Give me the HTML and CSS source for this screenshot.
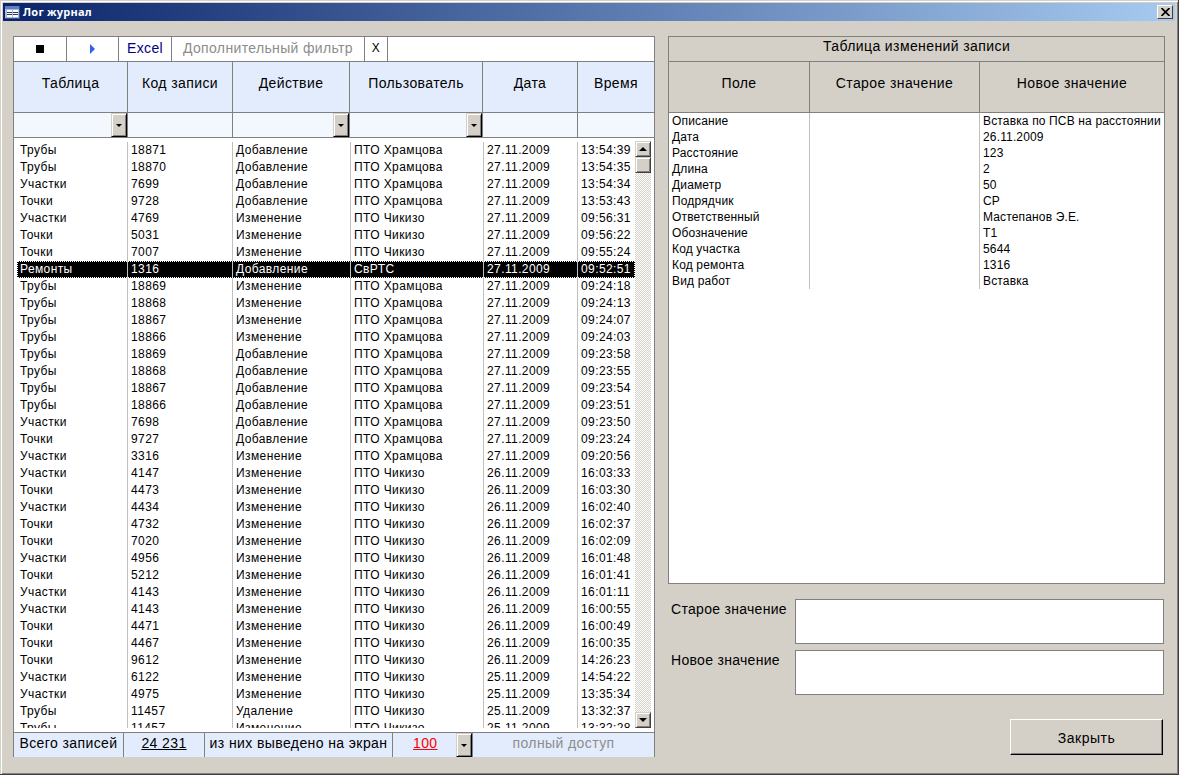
FILE: index.html
```html
<!DOCTYPE html>
<html lang="ru">
<head>
<meta charset="utf-8">
<title>Лог журнал</title>
<link rel="stylesheet" href="styles.css">
</head>
<body>
<div class="window">
  <div class="titlebar">
    <svg class="app-icon" width="15" height="13" viewBox="0 0 15 13"><rect width="15" height="13" fill="#a9b8dc"/><rect x="0" y="0" width="15" height="3" fill="#5f7fc4"/><rect x="2" y="4" width="5" height="7" fill="#fff"/><rect x="8" y="4" width="5" height="7" fill="#fff"/><path d="M2 6.5h5M2 8.500h5M8 6.500h5M8 8.500h5" stroke="#26365f"/><path d="M0 12.500h15M14.500 0v13" stroke="#3d5288"/></svg>
    <span class="title-text">Лог журнал</span>
    <span class="close-btn"><svg width="9" height="8" viewBox="0 0 9 8"><path d="M0.5 0l8 8M8.500 0l-8 8" fill="none" stroke="#000" stroke-width="1.7"/></svg></span>
  </div>
  <div class="content">
    <section class="log">
      <div class="toolbar">
        <div class="tb tb-stop"><i class="stop"></i></div>
        <div class="tb tb-next"><i class="next"></i></div>
        <div class="tb tb-excel">Excel</div>
        <div class="tb tb-filter">Дополнительный фильтр</div>
        <div class="tb tb-x">X</div>
      </div>
      <div class="log-head">
        <div>Таблица</div><div>Код записи</div><div>Действие</div><div>Пользователь</div><div>Дата</div><div>Время</div>
      </div>
      <div class="log-filter">
        <div><span class="drop"><i></i></span></div><div></div><div><span class="drop"><i></i></span></div><div><span class="drop"><i></i></span></div><div></div><div></div>
      </div>
      <div class="log-list">
        <div class="rows">
          <div class="row"><span>Трубы</span><span>18871</span><span>Добавление</span><span>ПТО Храмцова</span><span>27.11.2009</span><span>13:54:39</span></div>
          <div class="row"><span>Трубы</span><span>18870</span><span>Добавление</span><span>ПТО Храмцова</span><span>27.11.2009</span><span>13:54:35</span></div>
          <div class="row"><span>Участки</span><span>7699</span><span>Добавление</span><span>ПТО Храмцова</span><span>27.11.2009</span><span>13:54:34</span></div>
          <div class="row"><span>Точки</span><span>9728</span><span>Добавление</span><span>ПТО Храмцова</span><span>27.11.2009</span><span>13:53:43</span></div>
          <div class="row"><span>Участки</span><span>4769</span><span>Изменение</span><span>ПТО Чикизо</span><span>27.11.2009</span><span>09:56:31</span></div>
          <div class="row"><span>Точки</span><span>5031</span><span>Изменение</span><span>ПТО Чикизо</span><span>27.11.2009</span><span>09:56:22</span></div>
          <div class="row"><span>Точки</span><span>7007</span><span>Изменение</span><span>ПТО Чикизо</span><span>27.11.2009</span><span>09:55:24</span></div>
          <div class="row selected"><span>Ремонты</span><span>1316</span><span>Добавление</span><span>СвРТС</span><span>27.11.2009</span><span>09:52:51</span></div>
          <div class="row"><span>Трубы</span><span>18869</span><span>Изменение</span><span>ПТО Храмцова</span><span>27.11.2009</span><span>09:24:18</span></div>
          <div class="row"><span>Трубы</span><span>18868</span><span>Изменение</span><span>ПТО Храмцова</span><span>27.11.2009</span><span>09:24:13</span></div>
          <div class="row"><span>Трубы</span><span>18867</span><span>Изменение</span><span>ПТО Храмцова</span><span>27.11.2009</span><span>09:24:07</span></div>
          <div class="row"><span>Трубы</span><span>18866</span><span>Изменение</span><span>ПТО Храмцова</span><span>27.11.2009</span><span>09:24:03</span></div>
          <div class="row"><span>Трубы</span><span>18869</span><span>Добавление</span><span>ПТО Храмцова</span><span>27.11.2009</span><span>09:23:58</span></div>
          <div class="row"><span>Трубы</span><span>18868</span><span>Добавление</span><span>ПТО Храмцова</span><span>27.11.2009</span><span>09:23:55</span></div>
          <div class="row"><span>Трубы</span><span>18867</span><span>Добавление</span><span>ПТО Храмцова</span><span>27.11.2009</span><span>09:23:54</span></div>
          <div class="row"><span>Трубы</span><span>18866</span><span>Добавление</span><span>ПТО Храмцова</span><span>27.11.2009</span><span>09:23:51</span></div>
          <div class="row"><span>Участки</span><span>7698</span><span>Добавление</span><span>ПТО Храмцова</span><span>27.11.2009</span><span>09:23:50</span></div>
          <div class="row"><span>Точки</span><span>9727</span><span>Добавление</span><span>ПТО Храмцова</span><span>27.11.2009</span><span>09:23:24</span></div>
          <div class="row"><span>Участки</span><span>3316</span><span>Изменение</span><span>ПТО Храмцова</span><span>27.11.2009</span><span>09:20:56</span></div>
          <div class="row"><span>Участки</span><span>4147</span><span>Изменение</span><span>ПТО Чикизо</span><span>26.11.2009</span><span>16:03:33</span></div>
          <div class="row"><span>Точки</span><span>4473</span><span>Изменение</span><span>ПТО Чикизо</span><span>26.11.2009</span><span>16:03:30</span></div>
          <div class="row"><span>Участки</span><span>4434</span><span>Изменение</span><span>ПТО Чикизо</span><span>26.11.2009</span><span>16:02:40</span></div>
          <div class="row"><span>Точки</span><span>4732</span><span>Изменение</span><span>ПТО Чикизо</span><span>26.11.2009</span><span>16:02:37</span></div>
          <div class="row"><span>Точки</span><span>7020</span><span>Изменение</span><span>ПТО Чикизо</span><span>26.11.2009</span><span>16:02:09</span></div>
          <div class="row"><span>Участки</span><span>4956</span><span>Изменение</span><span>ПТО Чикизо</span><span>26.11.2009</span><span>16:01:48</span></div>
          <div class="row"><span>Точки</span><span>5212</span><span>Изменение</span><span>ПТО Чикизо</span><span>26.11.2009</span><span>16:01:41</span></div>
          <div class="row"><span>Участки</span><span>4143</span><span>Изменение</span><span>ПТО Чикизо</span><span>26.11.2009</span><span>16:01:11</span></div>
          <div class="row"><span>Участки</span><span>4143</span><span>Изменение</span><span>ПТО Чикизо</span><span>26.11.2009</span><span>16:00:55</span></div>
          <div class="row"><span>Точки</span><span>4471</span><span>Изменение</span><span>ПТО Чикизо</span><span>26.11.2009</span><span>16:00:49</span></div>
          <div class="row"><span>Точки</span><span>4467</span><span>Изменение</span><span>ПТО Чикизо</span><span>26.11.2009</span><span>16:00:35</span></div>
          <div class="row"><span>Точки</span><span>9612</span><span>Изменение</span><span>ПТО Чикизо</span><span>26.11.2009</span><span>14:26:23</span></div>
          <div class="row"><span>Участки</span><span>6122</span><span>Изменение</span><span>ПТО Чикизо</span><span>25.11.2009</span><span>14:54:22</span></div>
          <div class="row"><span>Участки</span><span>4975</span><span>Изменение</span><span>ПТО Чикизо</span><span>25.11.2009</span><span>13:35:34</span></div>
          <div class="row"><span>Трубы</span><span>11457</span><span>Удаление</span><span>ПТО Чикизо</span><span>25.11.2009</span><span>13:32:37</span></div>
          <div class="row"><span>Трубы</span><span>11457</span><span>Изменение</span><span>ПТО Чикизо</span><span>25.11.2009</span><span>13:32:28</span></div>
        </div>
        <div class="scrollbar">
          <span class="sb-btn"><i class="up"></i></span>
          <span class="sb-thumb"></span>
          <span class="sb-track"></span>
          <span class="sb-btn"><i class="down"></i></span>
        </div>
      </div>
      <div class="log-foot">
        <div class="f-total">Всего записей</div>
        <div class="f-count">24 231</div>
        <div class="f-shown">из них выведено на экран</div>
        <div class="f-limit"><u>100</u><span class="drop"><i></i></span></div>
        <div class="f-access">полный доступ</div>
      </div>
    </section>
    <section class="changes">
      <div class="ch-title">Таблица изменений записи</div>
      <div class="ch-head"><div>Поле</div><div>Старое значение</div><div>Новое значение</div></div>
      <div class="ch-body">
        <div class="ch-row"><span>Описание</span><span></span><span>Вставка по ПСВ на расстоянии</span></div>
        <div class="ch-row"><span>Дата</span><span></span><span>26.11.2009</span></div>
        <div class="ch-row"><span>Расстояние</span><span></span><span>123</span></div>
        <div class="ch-row"><span>Длина</span><span></span><span>2</span></div>
        <div class="ch-row"><span>Диаметр</span><span></span><span>50</span></div>
        <div class="ch-row"><span>Подрядчик</span><span></span><span>СР</span></div>
        <div class="ch-row"><span>Ответственный</span><span></span><span>Мастепанов Э.Е.</span></div>
        <div class="ch-row"><span>Обозначение</span><span></span><span>Т1</span></div>
        <div class="ch-row"><span>Код участка</span><span></span><span>5644</span></div>
        <div class="ch-row"><span>Код ремонта</span><span></span><span>1316</span></div>
        <div class="ch-row"><span>Вид работ</span><span></span><span>Вставка</span></div>
      </div>
      <div class="value-row first"><label>Старое значение</label><div class="value-box"></div></div>
      <div class="value-row"><label>Новое значение</label><div class="value-box"></div></div>
      <div class="actions"><button class="close-action" type="button">Закрыть</button></div>
    </section>
  </div>
</div>
</body>
</html>
```
FILE: styles.css
```css
* { box-sizing: border-box; }
html, body { margin: 0; padding: 0; background: #d4d0c8; }
body { font-family: "Liberation Sans", Arial, sans-serif; font-size: 12px; color: #000; overflow: hidden; }

.window {
  width: 1179px; height: 775px; padding: 3px;
  background: #d4d0c8;
  border-right: 1px solid #404040; border-bottom: 1px solid #404040;
  box-shadow: inset 1px 1px 0 #d4d0c8, inset 2px 2px 0 #fff, inset -1px -1px 0 #808080;
}
.titlebar {
  height: 18px; display: flex; align-items: center; padding: 0 2px 0 2px;
  background: linear-gradient(90deg, #0a246a, #a6caf0);
}
.app-icon { flex: none; margin-right: 3px; }
.title-text { color: #fff; font: bold 11px "Noto Sans", sans-serif; letter-spacing: .25px; flex: 1; position: relative; top: -1px; }
.close-btn {
  width: 16px; height: 14px; display: flex; align-items: center; justify-content: center;
  background: #d4d0c8; border: 1px solid; border-color: #fff #404040 #404040 #fff;
}

.content { display: flex; gap: 13px; padding: 15px 0 0 10px; }

/* left panel */
.log { width: 642px; height: 721px; display: flex; flex-direction: column; border: 1px solid #808080; background: #fff; }
.toolbar { height: 25px; flex: none; display: flex; border-bottom: 1px solid #808080; background: #fff; font-size: 14px; letter-spacing: .35px; }
.tb { display: flex; align-items: center; justify-content: center; border-right: 1px solid #808080; padding-bottom: 2px; }
.tb-stop { width: 53px; padding-bottom: 0; }
.tb-next { width: 52px; padding-bottom: 0; }
.tb-excel { width: 53px; color: #000080; }
.tb-filter { width: 193px; color: #8c8c8c; }
.tb-x { width: 23px; font-size: 12px; }
.stop { width: 8px; height: 8px; background: #000; display: block; }
.next { width: 0; height: 0; border-left: 5px solid #2f62f0; border-top: 5px solid transparent; border-bottom: 5px solid transparent; display: block; }

.log-head, .log-filter { display: grid; grid-template-columns: 114px 105px 117px 133px 95px 76px; flex: none; }
.log-head { height: 51px; background: #e3ecfd; border-bottom: 1px solid #808080; font-size: 14px; letter-spacing: .4px; }
.log-head > div { display: flex; align-items: center; justify-content: center; border-right: 1px solid #808080; padding-bottom: 8px; }
.log-head > div:last-child, .log-filter > div:last-child { border-right: 0; }
.log-filter { height: 25px; background: #f3f8ff; border-bottom: 1px solid #808080; }
.log-filter > div { display: flex; justify-content: flex-end; border-right: 1px solid #808080; }

.drop {
  width: 16px; height: 24px; display: flex; align-items: center; justify-content: center; flex: none;
  background: #d4d0c8; border: 1px solid; border-color: #d4d0c8 #000 #000 #d4d0c8;
  box-shadow: inset 1px 1px 0 #fff, inset -1px -1px 0 #808080;
}
.drop i { width: 0; height: 0; border-top: 3px solid #000; border-left: 3px solid transparent; border-right: 3px solid transparent; display: block; }

.log-list { height: 594px; flex: none; display: flex; align-items: flex-start; background: #fff; padding: 4px 0 0 3px; }
.rows { width: 618px; height: 586px; flex: none; overflow: hidden; }
.row { height: 17px; display: grid; grid-template-columns: 111px 105px 118px 133px 94px 57px; line-height: 16px; letter-spacing: .4px; }
.row > span { padding-left: 3px; border-right: 1px solid #c0c0c0; white-space: nowrap; overflow: hidden; }
.row > span:last-child { border-right: 0; }
.row.selected { background: #000; color: #fff; outline: 1px dotted #fff; outline-offset: -1px; }
.scrollbar { width: 16px; height: 587px; margin-top: -1px; flex: none; display: flex; flex-direction: column; }
.sb-btn, .sb-thumb {
  height: 16px; flex: none; display: flex; align-items: center; justify-content: center;
  background: #d4d0c8; border: 1px solid; border-color: #d4d0c8 #404040 #404040 #d4d0c8;
  box-shadow: inset 1px 1px 0 #fff, inset -1px -1px 0 #808080;
}
.sb-track { flex: 1; background: repeating-conic-gradient(#d4d0c8 0 25%, #fff 0 50%) 0 0 / 2px 2px; }
.sb-btn i { width: 0; height: 0; display: block; border-left: 4px solid transparent; border-right: 4px solid transparent; }
.sb-btn .up { border-bottom: 4px solid #000; }
.sb-btn .down { border-top: 4px solid #000; }

.log-foot { height: 25px; flex: none; display: flex; background: #e3ecfd; border-top: 1px solid #808080; font-size: 14px; letter-spacing: .4px; }
.log-foot > div { display: flex; align-items: center; justify-content: center; border-right: 1px solid #808080; padding-bottom: 5px; }
.f-total { width: 110px; }
.f-count { width: 81px; text-decoration: underline; }
.f-shown { width: 188px; }
.log-foot .f-limit { width: 80px; color: #f00; justify-content: flex-start; padding: 0 0 0 20px; }
.f-limit u { flex: 1; padding-bottom: 5px; }
.f-limit .drop { height: 24px; color: #000; }
.log-foot .f-access { flex: 1; border-right: 0; color: #8c8c8c; }

/* right panel */
.changes { width: 497px; display: flex; flex-direction: column; }
.ch-title { height: 26px; border: 1px solid #808080; font-size: 14px; letter-spacing: .4px; text-align: center; line-height: 18px; }
.ch-head { height: 51px; display: grid; grid-template-columns: 141px 170px 185px; border-left: 1px solid #808080; font-size: 14px; letter-spacing: .4px; }
.ch-head > div { display: flex; align-items: center; justify-content: center; border-right: 1px solid #808080; border-bottom: 1px solid #808080; padding-bottom: 9px; }
.ch-body { height: 471px; background: #fff; border: 1px solid #808080; border-top: 0; letter-spacing: .15px; }
.ch-row { height: 16px; display: grid; grid-template-columns: 141px 170px 184px; line-height: 16px; }
.ch-row > span { padding-left: 3px; border-right: 1px solid #c0c0c0; white-space: nowrap; overflow: hidden; }
.ch-row > span:last-child { border-right: 0; }

.value-row { display: flex; margin-top: 6px; }
.value-row.first { margin-top: 15px; }
.value-row label { width: 127px; padding-left: 3px; font-size: 14px; letter-spacing: .3px; line-height: 20px; flex: none; }
.value-box { width: 369px; height: 45px; background: #fff; border: 1px solid #808080; }
.actions { display: flex; justify-content: flex-end; padding: 24px 2px 0 0; }
.close-action {
  width: 153px; height: 36px; background: #d4d0c8; font: 14px "Liberation Sans", Arial, sans-serif; letter-spacing: .5px; color: #000; padding: 2px 0 0;
  border: 1px solid; border-color: #fff #000 #000 #fff; box-shadow: inset -1px -1px 0 #808080; border-radius: 0;
}
```
